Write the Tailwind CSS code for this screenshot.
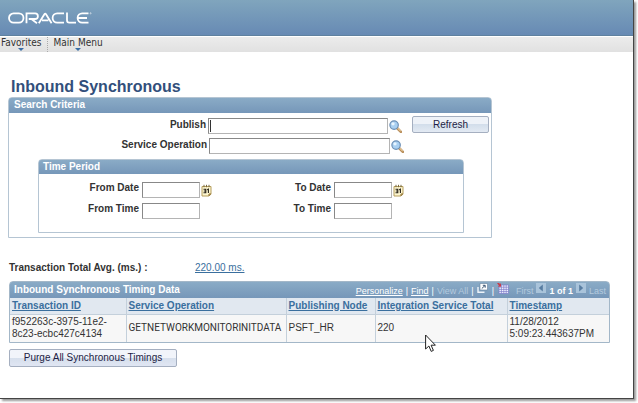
<!DOCTYPE html>
<html lang="en">
<head>
    <meta charset="UTF-8">
    <meta name="viewport" content="width=device-width, initial-scale=1.0">
    <title>Inbound Synchronous</title>
    <script src="https://cdn.jsdelivr.net/npm/@tailwindcss/browser@4"></script>
</head>
<body class="min-h-screen flex flex-col bg-white pr-1 pb-1 font-['Liberation_Sans',Arial,sans-serif] text-[10px] leading-3 text-[#333]">
    <svg class="hidden">
        <symbol id="lookup" viewBox="0 0 12 12">
            <path d="M7.4 7.4 11 11" stroke="#b98f5c" stroke-width="2.4" stroke-linecap="round"/>
            <path d="M7.6 7 10.8 10.2" stroke="#e6c897" stroke-width="1"/>
            <circle cx="4.7" cy="4.7" r="3.9" fill="#a9d0f2" stroke="#6c8fb5" stroke-width="1.1"/>
            <circle cx="3.7" cy="3.5" r="1.5" fill="#e8f5ff"/>
        </symbol>
        <symbol id="calendar" viewBox="0 0 11 13">
            <path d="M1 2.5h9v7.7L7.8 12H1z" fill="#fdf6cf" stroke="#b59d5c"/>
            <path d="M10 10H8v2" fill="none" stroke="#8b6d2c"/>
            <path d="M3 .8v2.4M5.5 .8v2.4M8 .8v2.4" stroke="#77683f"/>
            <path d="M2.5 5.2h2.3v3.6H2.5M2.8 7h2M6.2 5.8l1.2-.7v4" fill="none" stroke="#262018" stroke-width="1.1"/>
        </symbol>
    </svg>

    <div class="grow flex flex-col border-r border-b border-[#444] shadow-[2px_2px_2px_#999]">
        <header class="h-[36px] flex items-center pl-2 pt-px bg-linear-to-b from-[#80a5bd] to-[#678ab4] border-b border-[#5f819f]">
            <svg class="w-[84px] h-[12px]" viewBox="0 0 84 12" fill="none" stroke="#fff" stroke-width="1.8" role="img" aria-label="Oracle">
                <rect x="1" y="1.4" width="14.5" height="9.2" rx="4.6"/>
                <path d="M18.5 11.2V1.4h8.6a2.8 2.8 0 0 1 0 5.6h-6.4M23.4 7l5.6 4.2"/>
                <path d="M30.8 11.2 36.4 2.2q.8-1.2 1.6 0L43.6 11.2M34 8.3h6.4"/>
                <path d="M56 1.4h-6.8a4.6 4.6 0 0 0 0 9.2H56"/>
                <path d="M59 .6v7.6q0 2.4 2.4 2.4H68"/>
                <path d="M80.5 1.4h-6.3a4.6 4.6 0 0 0 0 9.2h6.3M70.5 6H79"/>
                <circle cx="82.6" cy="1.3" r=".6" stroke-width=".5"/>
            </svg>
        </header>

        <nav class="h-[15px] mt-px flex bg-linear-to-b from-[#ececec] to-[#e1e1e1] font-['DejaVu_Sans_Condensed','DejaVu_Sans',sans-serif] text-[10px] leading-[11px]">
            <a href="#" class="flex flex-col items-center pl-px pr-[5px] border-r border-dotted border-[#aaa]">Favorites
                <svg class="w-[6px] h-[3px]" viewBox="0 0 6 3"><path d="M0 0h6L3 3z" fill="#3a6ea5"/></svg>
            </a>
            <a href="#" class="flex flex-col items-center pl-[6px]">Main Menu
                <svg class="w-[6px] h-[3px]" viewBox="0 0 6 3"><path d="M0 0h6L3 3z" fill="#3a6ea5"/></svg>
            </a>
        </nav>

        <main class="pl-2 pr-6 pt-[25px]">
            <h1 class="pl-[3px] text-[16px] leading-5 font-bold text-[#324f7b]">Inbound Synchronous</h1>

            <form>
                <section class="max-w-[484px] border border-[#b5c5d3] rounded-t-sm pb-[4px]">
                    <h2 class="h-[15px] px-[5px] leading-[14px] rounded-t-xs font-bold text-white bg-linear-to-b from-[#8aabc6] to-[#7697b9]">Search Criteria</h2>
                    <div class="flex justify-between items-start pt-[3px] pr-[2px]">
                        <div class="flex flex-col gap-1 pt-[2px]">
                            <div class="relative flex items-center">
                                <label for="publish" class="w-[197px] text-right font-bold pb-[3px]">Publish</label>
                                <input id="publish" type="text" class="ml-[2px] w-[180px] h-4 border border-[#b4b4b4] border-t-[#888] border-l-[#888] outline-none px-px">
                                <span class="absolute left-[201px] top-[2px] w-px h-3 bg-[#333]"></span>
                                <button type="button" aria-label="Look up Publish" class="ml-px"><svg class="size-[13px]"><use href="#lookup"/></svg></button>
                            </div>
                            <div class="flex items-center">
                                <label for="operation" class="w-[198px] text-right font-bold pb-[3px]">Service Operation</label>
                                <input id="operation" type="text" class="ml-[2px] w-[181px] h-4 border border-[#b4b4b4] border-t-[#888] border-l-[#888] px-px">
                                <button type="button" aria-label="Look up Service Operation" class="ml-px"><svg class="size-[13px]"><use href="#lookup"/></svg></button>
                            </div>
                        </div>
                        <button type="button" class="w-[77px] h-[17px] rounded-xs border border-[#a5afc0] bg-linear-to-b from-[#eef2f8] from-50% via-[#d3deeb] via-50% to-[#e3eaf3] text-[#1d1d45]">Refresh</button>
                    </div>

                    <section class="mt-[5px] ml-[29px] mr-[27px] border border-[#b5c5d3] rounded-t-sm">
                        <h3 class="h-[14px] px-[4px] leading-[13px] rounded-t-xs font-bold text-white bg-linear-to-b from-[#8aabc6] to-[#7697b9]">Time Period</h3>
                        <div class="grid grid-cols-[192px_auto] gap-y-[5px] pt-2 pb-[13px]">
                            <div class="flex items-center">
                                <label for="from-date" class="w-[100px] text-right font-bold pb-[4px]">From Date</label>
                                <input id="from-date" type="text" class="ml-[3px] w-[58px] h-4 border border-[#b4b4b4] border-t-[#888] border-l-[#888] px-px">
                                <button type="button" aria-label="Choose from date" class="ml-px"><svg class="w-[11px] h-[13px]"><use href="#calendar"/></svg></button>
                            </div>
                            <div class="flex items-center">
                                <label for="to-date" class="w-[100px] text-right font-bold pb-[4px]">To Date</label>
                                <input id="to-date" type="text" class="ml-[3px] w-[58px] h-4 border border-[#b4b4b4] border-t-[#888] border-l-[#888] px-px">
                                <button type="button" aria-label="Choose to date" class="ml-px"><svg class="w-[11px] h-[13px]"><use href="#calendar"/></svg></button>
                            </div>
                            <div class="flex items-center">
                                <label for="from-time" class="w-[100px] text-right font-bold pb-[4px]">From Time</label>
                                <input id="from-time" type="text" class="ml-[3px] w-[58px] h-4 border border-[#b4b4b4] border-t-[#888] border-l-[#888] px-px">
                            </div>
                            <div class="flex items-center">
                                <label for="to-time" class="w-[100px] text-right font-bold pb-[4px]">To Time</label>
                                <input id="to-time" type="text" class="ml-[3px] w-[58px] h-4 border border-[#b4b4b4] border-t-[#888] border-l-[#888] px-px">
                            </div>
                        </div>
                    </section>
                </section>
            </form>

            <div class="flex pt-[24px]">
                <span class="w-[187px] pl-px font-bold">Transaction Total Avg. (ms.) :</span>
                <a href="#" class="underline text-[#3a6f9e]">220.00 ms.</a>
            </div>

            <div class="ml-px -mr-px mt-[7px] border border-[#a3b7c8] rounded-t-sm">
                <div class="h-[16px] flex items-center justify-between pl-1 pr-[3px] rounded-t-xs text-white bg-linear-to-b from-[#8aabc6] to-[#7697b9]">
                    <h2 class="font-bold">Inbound Synchronous Timing Data</h2>
                    <div class="flex items-center gap-[3px] pt-[2px] text-[9px] whitespace-nowrap">
                        <a href="#" class="underline">Personalize</a>
                        <span>|</span>
                        <a href="#" class="underline">Find</a>
                        <span>|</span>
                        <span class="text-[#b4cade]">View All</span>
                        <span>|</span>
                        <button type="button" aria-label="Open in new window" class="mb-[6px]">
                            <svg class="w-[11px] h-[10px]" viewBox="0 0 11 10"><path d="M1 4v5.3h6.5" fill="none" stroke="#eef4fa" stroke-width="1.4"/><path d="M3 .5h7.5v6.5H3z" fill="#fff" stroke="#66829c" stroke-width=".6"/><path d="m4.8 5.5 3.2-3M5.8 2.3h2.4v2.4" fill="none" stroke="#3b5573"/></svg>
                        </button>
                        <span class="ml-px">|</span>
                        <button type="button" aria-label="Download table" class="mb-[6px]">
                            <svg class="w-[12px] h-[11px]" viewBox="0 0 12 11"><path d="M2 2h9.5v8.5H2z" fill="#f3f3ff"/><path d="M2 4.2h9.5M2 6.4h9.5M2 8.6h9.5M4.4 2v8.5M6.8 2v8.5M9.2 2v8.5M2 2h9.5v8.5H2z" fill="none" stroke="#7b7bc9" stroke-width=".7"/><path d="M0 0h2l1 1 1-.7v3.5H.8L2 2.8z" fill="#c93c48"/></svg>
                        </button>
                        <span class="ml-1 text-[#b4cade]">First</span>
                        <button type="button" disabled aria-label="Previous" class="mb-[6px]">
                            <svg class="size-[10px]" viewBox="0 0 10 10"><path d="M0 0h10v10H0z" fill="#a9c3da"/><path d="M6.8 1.5v7L2.8 5z" fill="#587da2"/></svg>
                        </button>
                        <span class="font-bold">1 of 1</span>
                        <button type="button" disabled aria-label="Next" class="mb-[6px]">
                            <svg class="size-[10px]" viewBox="0 0 10 10"><path d="M0 0h10v10H0z" fill="#a9c3da"/><path d="M3.2 1.5v7l4-3.5z" fill="#587da2"/></svg>
                        </button>
                        <span class="text-[#b4cade]">Last</span>
                    </div>
                </div>
                <table class="w-full table-fixed border-collapse">
                    <colgroup>
                        <col class="w-[116px]">
                        <col class="w-[160px]">
                        <col class="w-[89px]">
                        <col class="w-[132px]">
                        <col>
                    </colgroup>
                    <thead class="bg-[#e1e8f0] text-left">
                        <tr class="h-[16px]">
                            <th class="pl-[2px]"><a href="#" class="underline text-[#3a6f9e]">Transaction ID</a></th>
                            <th class="pl-[2px] border-l border-[#c4d0db]"><a href="#" class="underline text-[#3a6f9e]">Service Operation</a></th>
                            <th class="pl-[2px] border-l border-[#c4d0db]"><a href="#" class="underline text-[#3a6f9e]">Publishing Node</a></th>
                            <th class="pl-[2px] border-l border-[#c4d0db]"><a href="#" class="underline text-[#3a6f9e]">Integration Service Total</a></th>
                            <th class="pl-[2px] border-l border-[#c4d0db]"><a href="#" class="underline text-[#3a6f9e]">Timestamp</a></th>
                        </tr>
                    </thead>
                    <tbody class="bg-[#f7f7f7]">
                        <tr class="h-[28px] border-t border-[#c4d0db]">
                            <td class="pl-[2px]">f952263c-3975-11e2-8c23-ecbc427c4134</td>
                            <td class="pl-[2px] border-l border-[#c4d0db] font-['Roboto',Arial,sans-serif]">GETNETWORKMONITORINITDATA</td>
                            <td class="pl-[2px] border-l border-[#c4d0db]">PSFT_HR</td>
                            <td class="pl-[2px] border-l border-[#c4d0db]">220</td>
                            <td class="pl-[2px] border-l border-[#c4d0db]">11/28/2012<br>5:09:23.443637PM</td>
                        </tr>
                    </tbody>
                </table>
            </div>

            <button type="button" class="ml-px mt-[6px] w-[168px] h-[18px] rounded-xs border border-[#a5afc0] bg-linear-to-b from-[#f1f4fa] from-50% via-[#d6dfec] via-50% to-[#e0e6f3] text-[#1d1d45]">Purge All Synchronous Timings</button>
        </main>
    </div>

    <!-- mouse pointer -->
    <svg class="absolute left-[425px] top-[334px] w-[12px] h-[19px]" viewBox="0 0 12 19"><path d="M.6 1v14l3.3-3 2.3 5.4 2.2-1-2.3-5.2h4.3z" fill="#fff" stroke="#222"/></svg>
</body>
</html>
